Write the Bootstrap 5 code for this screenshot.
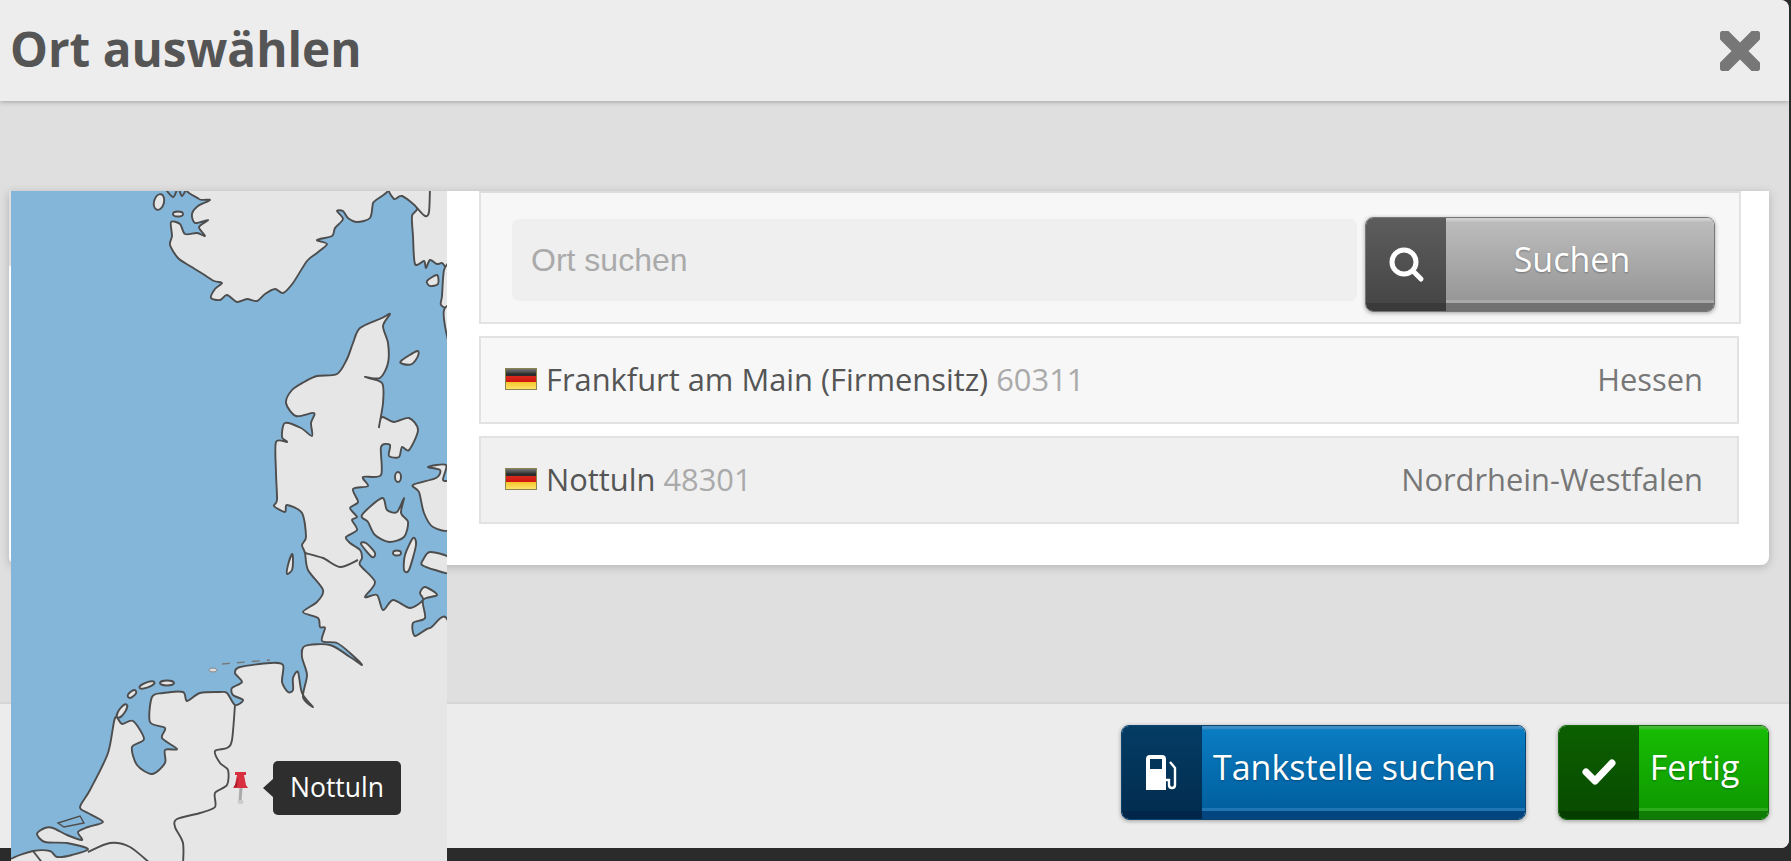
<!DOCTYPE html>
<html lang="de">

<head>
    <meta charset="UTF-8">
    <meta name="viewport" content="width=device-width, initial-scale=1.0">
    <title>Ort auswählen</title>
    <link href="https://cdn.jsdelivr.net/npm/bootstrap@5.3.0/dist/css/bootstrap.min.css" rel="stylesheet">
    <style>
        html, body { height: 861px; overflow: hidden; }
        body { background: #2b2b2b; font-family: "Open Sans", sans-serif; color: #555; }
        .sheet { width: 1789px; height: 848px; background: #dfdfdf; border-radius: 0 8px 8px 0; overflow: hidden; position: relative; }
        .sheet-head { height: 101px; flex: none; background: #ededed; padding: 0 29px 4px 10px; box-shadow: 0 1px 5px rgba(0,0,0,.28); position: relative; z-index: 2; border-radius: 0 8px 0 0; }
        .sheet-title { font-size: 47.7px; font-weight: 700; color: #555; margin: 0; line-height: 1; }
        .sheet-head svg { margin-top: 4px; }
        .sheet-main { padding: 90px 20px 0 9px; }
        .place-panel { height: 374px; padding: 0 28px 0 470px; border-radius: 0 0 8px 8px; background: linear-gradient(#dfdfdf, #dfdfdf) 0 0 / 2px 75px no-repeat, #fff; box-shadow: 0 2px 10px rgba(0,0,0,.2); }
        .search-box { height: 133px; padding: 24px 24px 0 31px; background: #f7f7f7; border: 2px solid #e3e3e3; border-top-color: #ddd; }
        .search-input.form-control { height: 82px; margin-top: 2px; background: #efefef; border: 0; border-radius: 7px; font: 32px "Liberation Sans", sans-serif; padding: 0 19px; color: #555; box-shadow: none; }
        .search-input::placeholder { color: #aaa; opacity: 1; }
        .place-row { height: 88px; margin: 12px 2px 0 0; padding: 0 34px 2px 24px; background: #f7f7f7; border: 2px solid #e2e2e2; font-size: 30.85px; }
        .place-row.alt { background: #f0f0f0; }
        .flag-de { width: 32px; height: 22px; flex: none; margin-right: 9px; border: 1px solid #8a8450; background: linear-gradient(#777 0, #222 30%, #333 34%, #d6281d 36%, #d2160f 64%, #f4c62d 67%, #ffe36a 100%); }
        .zip { color: #aaa; }
        .state { color: #777; }
        .sheet-foot { height: 146px; flex: none; padding: 21px 20px 0 0; gap: 32px; background: #ececec; border-top: 2px solid #d6d6d6; }
        .tool-btn.btn { height: 95px; padding: 0; border: 1px solid var(--edge); border-radius: 8px; overflow: hidden; color: #fff; font-size: 34px; line-height: 1; box-shadow: 0 1px 4px rgba(0,0,0,.35); align-items: stretch; flex: none; }
        .tool-ico { width: 80px; flex: none; display: flex; align-items: center; justify-content: center; padding-bottom: 2px;
            background: linear-gradient(var(--ico1), var(--ico2) calc(100% - 8px), var(--ico3) calc(100% - 8px)); }
        .tool-txt { flex: 1; display: flex; align-items: center; justify-content: center; padding: 0 18px 12px 0; text-shadow: 0 1px 2px rgba(0,0,0,.3);
            background: linear-gradient(var(--hi) 0, var(--hi) 2px, var(--top) 4px, var(--bot) calc(100% - 11px), var(--hi2) calc(100% - 11px), var(--hi2) calc(100% - 8px), var(--lip) calc(100% - 8px)); }
        .tool-grey { --edge: #777; --ico1: #5d5d5d; --ico2: #464646; --ico3: #3a3a3a; --hi: #cfcfcf; --hi2: #a9a9a9; --top: #bcbcbc; --bot: #979797; --lip: #707070; width: 350px; }
        .tool-grey .tool-txt { padding-right: 16px; }
        .tool-blue { --edge: #0c4470; --ico1: #053c64; --ico2: #012d50; --ico3: #01264a; --hi: #3d8fc6; --hi2: #1f76b2; --top: #0a7cc2; --bot: #00609f; --lip: #03467f; width: 405px; }
        .tool-green { --edge: #166b0c; --ico1: #0b5f00; --ico2: #084c00; --ico3: #053c00; --hi: #45b834; --hi2: #2dab1c; --top: #17bc03; --bot: #0f9a00; --lip: #0f7d05; width: 211px; }
        .map-box { position: absolute; left: 11px; top: 191px; width: 436px; height: 670px; background: #84b6da; z-index: 3; overflow: hidden; }
        .map-box svg { display: block; filter: blur(.55px); }
        .map-land { fill: #e6e6e6; stroke: #4d4d4d; stroke-width: 1.9; stroke-linejoin: round; }
        .map-line { fill: none; stroke: #4d4d4d; stroke-width: 1.9; stroke-linejoin: round; }
        .map-tip { position: absolute; left: 262px; top: 570px; width: 128px; height: 54px; background: #2e2e2e; border-radius: 5px; color: #fff; font-size: 26.5px; }
        .map-tip::before { content: ""; position: absolute; left: -10px; top: 18px; border: 9px solid transparent; border-left: 0; border-right: 10px solid #2e2e2e; }
    </style>
</head>

<body>
    <div class="sheet d-flex flex-column">
        <div class="sheet-head d-flex align-items-center justify-content-between">
            <h1 class="sheet-title">Ort auswählen</h1>
            <svg width="40" height="40" viewBox="0 0 40 40" aria-label="Schließen">
                <path d="M5 5 L35 35 M35 5 L5 35" stroke="#777" stroke-width="12" stroke-linecap="round" />
            </svg>
        </div>

        <div class="sheet-main flex-grow-1">
            <div class="place-panel">
                <div class="search-box d-flex align-items-start gap-2">
                    <input type="text" class="form-control search-input" placeholder="Ort suchen">
                    <button type="button" class="btn tool-btn tool-grey d-flex">
                        <span class="tool-ico">
                            <svg width="38" height="38" viewBox="0 0 38 38">
                                <circle cx="17" cy="17" r="12" fill="none" stroke="#fff" stroke-width="5" />
                                <path d="M26 26 L34 34" stroke="#fff" stroke-width="5" stroke-linecap="round" />
                            </svg>
                        </span>
                        <span class="tool-txt">Suchen</span>
                    </button>
                </div>
                <div class="place-row d-flex align-items-center">
                    <span class="flag-de"></span>
                    <span>Frankfurt am Main (Firmensitz) <span class="zip">60311</span></span>
                    <span class="state ms-auto">Hessen</span>
                </div>
                <div class="place-row alt d-flex align-items-center">
                    <span class="flag-de"></span>
                    <span>Nottuln <span class="zip">48301</span></span>
                    <span class="state ms-auto">Nordrhein-Westfalen</span>
                </div>
            </div>
        </div>

        <div class="sheet-foot d-flex justify-content-end">
            <button type="button" class="btn tool-btn tool-blue d-flex">
                <span class="tool-ico">
                    <svg width="34" height="36" viewBox="0 0 34 36">
                        <path fill="#fff" fill-rule="evenodd" d="M1 5 Q1 1 5 1 H17 Q21 1 21 5 V36 H1 Z M5 5 V15 H17 V5 Z" />
                        <path d="M21 26 H24 V31 Q24 34 27 34 Q30 34 30 31 V14 L25 8" fill="none" stroke="#fff" stroke-width="2.4" />
                    </svg>
                </span>
                <span class="tool-txt">Tankstelle suchen</span>
            </button>
            <button type="button" class="btn tool-btn tool-green d-flex">
                <span class="tool-ico">
                    <svg width="34" height="28" viewBox="0 0 34 28">
                        <path d="M4 14 L13 23 L30 5" fill="none" stroke="#fff" stroke-width="7" stroke-linejoin="round" stroke-linecap="round" />
                    </svg>
                </span>
                <span class="tool-txt">Fertig</span>
            </button>
        </div>
    </div>

    <!-- Karte, Koordinaten im viewBox sind Seitenpixel -->
    <div class="map-box">
        <svg width="436" height="670" viewBox="11 191 436 670">
            <!-- Norwegen -->
            <path class="map-land" d="M198 186 L199 199 L210 200 L198 206 L192 214 L195 223 L208 220 L199 227 L205 236 L197 233 L185 234 L180 224 L171 222 L172 236 L170 245 L178 258 L190 266 L203 274 L214 281 L222 283 L215 289 L211 298 L220 300 L227 295 L237 302 L247 299 L257 301 L265 294 L275 289 L283 293 L293 283 L307 261 L317 253 L327 244 L317 240 L332 236 L335 228 L343 219 L337 211 L343 211 L348 218 L357 222 L370 218 L373 203 L378 186 Z" />
            <!-- Schweden -->
            <path class="map-land" d="M392 186 L394 199 L402 196 L417 208 L412 216 L413 236 L415 264 L424 261 L426 268 L430 260 L437 264 L442 263 L450 265 L450 186 Z" />
            <path class="map-line" d="M430 186 L429 212 L425 216 L417 208" />
            <path class="map-land" d="M450 266 L444 270 L442 296 L441 305 L450 306 Z" />
            <path class="map-land" d="M450 308 L444 310 L445 326 L450 345 Z" />
            <!-- Festland: Jütland, Küste bis Niederlande, Ostsee zurück -->
            <path class="map-land" d="M390 314 L382 318 L360 328 L353 343 L347 359 L337 374 L317 376 L304 382 L292 390 L286 403 L296 416 L314 413 L311 423 L312 436 L301 428 L285 423 L282 437 L287 442 L276 442 L276 473 L277 500 L274 506 L285 512 L287 505 L302 513 L306 537 L302 545 L305 553 L308 570 L323 590 L317 602 L303 612 L318 618 L320 627 L325 628 L322 641 L337 643 L350 653 L362 665 L350 657 L330 645 L305 646 L302 657 L307 675 L303 697 L313 707 L302 693 L298 672 L293 678 L293 690 L288 692 L282 682 L283 665 L270 663 L240 667 L235 673 L242 682 L232 688 L233 695 L243 700 L235 705 L227 693 L220 692 L200 693 L187 701 L183 692 L163 693 L152 697 L150 722 L165 728 L162 738 L177 749 L165 750 L165 763 L152 774 L137 765 L132 747 L144 739 L133 721 L122 724 L115 718 L108 753 L90 790 L80 807 L88 813 L103 822 L88 827 L78 832 L82 840 L67 835 L53 828 L45 828 L37 834 L45 842 L67 843 L88 849 L72 855 L57 857 L50 851 L33 851 L13 858 L9 865 L450 865 L450 633 L430 628 L415 636 L413 623 L425 618 L423 600 L437 595 L425 587 L420 593 L423 600 L410 608 L393 600 L383 610 L377 595 L365 597 L375 582 L360 565 L362 558 L360 550 L350 543 L346 537 L357 530 L352 520 L357 517 L350 508 L358 502 L353 489 L368 486 L363 477 L381 475 L381 447 L390 445 L389 456 L399 457 L402 447 L409 450 L418 430 L409 418 L394 422 L382 417 L379 427 L383 403 L382 383 L365 377 L380 378 L388 363 L388 343 L383 326 Z" />
            <!-- Grenzen -->
            <path class="map-line" d="M305 553 L323 558 L340 567 L358 560" />
            <path class="map-line" d="M235 705 L232 740 L227 748 L215 751 L220 763 L228 770 L227 785 L215 793 L215 807 L200 813 L177 819 L175 827 L183 843 L183 865" />
            <path class="map-line" d="M88 852 L110 843 L130 847 L152 865" />
            <path class="map-line" d="M33 851 L44 865" />
            <path d="M58 823 L80 816 L84 823 L64 827 Z" fill="#84b6da" stroke="#4d4d4d" stroke-width="1.4" />
            <!-- Inseln -->
            <ellipse class="map-land" cx="159" cy="202" rx="5" ry="8" transform="rotate(15 159 202)" />
            <ellipse class="map-land" cx="178" cy="214" rx="5" ry="2.5" />
            <path class="map-line" d="M163 186 L173 197 L178 188 L182 196 L188 186" />
            <path class="map-land" d="M427 281 L437 275 L438 284 L430 286 Z" />
            <path class="map-land" d="M401 361 L417 351 L418 356 L412 364 L403 364 Z" />
            <path class="map-land" d="M362 515 L382 498 L387 510 L397 512 L404 498 L401 513 L408 522 L404 537 L389 542 L375 535 L368 522 Z" />
            <path class="map-land" d="M428 467 L446 465 L443 480 L450 485 L450 528 L433 527 L424 513 L419 492 L413 485 L436 478 L440 470 Z" />
            <ellipse class="map-land" cx="398" cy="477" rx="3" ry="5" />
            <path class="map-land" d="M413 538 L416 545 L409 570 L404 570 L405 555 Z" />
            <path class="map-land" d="M361 544 L366 543 L375 553 L372 557 Z" />
            <ellipse class="map-land" cx="397" cy="553" rx="4" ry="2.5" />
            <path class="map-land" d="M423 560 L430 552 L450 558 L450 573 L435 570 L422 565 Z" />
            <path class="map-land" d="M292 554 L293 560 L292 570 L287 574 L288 565 Z" />
            <ellipse class="map-land" cx="122" cy="711" rx="8" ry="3" transform="rotate(-55 122 711)" />
            <ellipse class="map-land" cx="132" cy="694" rx="5" ry="2.5" transform="rotate(-40 132 694)" />
            <ellipse class="map-land" cx="147" cy="685" rx="8" ry="2.5" transform="rotate(-20 147 685)" />
            <ellipse class="map-land" cx="167" cy="683" rx="7" ry="2.5" />
            <ellipse cx="213" cy="670" rx="4" ry="2" fill="#ddd" stroke="#888" />
            <path d="M222 664 L270 660" stroke="#777" stroke-width="1.3" stroke-dasharray="8 7" fill="none" />
            <!-- Pin -->
            <path d="M241 787 L240 802" stroke="#aaa" stroke-width="3" />
            <ellipse cx="240.5" cy="802" rx="3" ry="2" fill="#ccc" />
            <path d="M235 772 H246 V775 H244 L246 785 L248 788 H233 L235 785 L237 775 H235 Z" fill="#d9303f" />
            <path d="M238 776 L237 787 H234 L236 783 Z" fill="#a51c2a" />
        </svg>
        <div class="map-tip d-flex align-items-center justify-content-center">Nottuln</div>
    </div>

    <script src="https://cdn.jsdelivr.net/npm/bootstrap@5.3.0/dist/js/bootstrap.bundle.min.js"></script>
    <script>
        // Kuestenlinien glaetten: Polygon-Punkte zu Kurven (Catmull-Rom)
        document.querySelectorAll('path.map-land, path.map-line').forEach(function (el) {
            const raw = el.getAttribute('d');
            const closed = raw.trim().endsWith('Z');
            const pts = raw.match(/-?\d+(\.\d+)?\s+-?\d+(\.\d+)?/g).map(function (s) {
                return s.trim().split(/\s+/).map(Number);
            });
            const n = pts.length;
            const at = function (i) {
                return closed ? pts[(i + n) % n] : pts[Math.max(0, Math.min(n - 1, i))];
            };
            let d = 'M' + pts[0].join(' ');
            for (let i = 0; i < (closed ? n : n - 1); i++) {
                const p0 = at(i - 1), p1 = at(i), p2 = at(i + 1), p3 = at(i + 2);
                const c1 = [p1[0] + (p2[0] - p0[0]) / 7, p1[1] + (p2[1] - p0[1]) / 7];
                const c2 = [p2[0] - (p3[0] - p1[0]) / 7, p2[1] - (p3[1] - p1[1]) / 7];
                d += ' C' + c1.join(' ') + ' ' + c2.join(' ') + ' ' + p2.join(' ');
            }
            el.setAttribute('d', closed ? d + ' Z' : d);
        });
    </script>
</body>

</html>
